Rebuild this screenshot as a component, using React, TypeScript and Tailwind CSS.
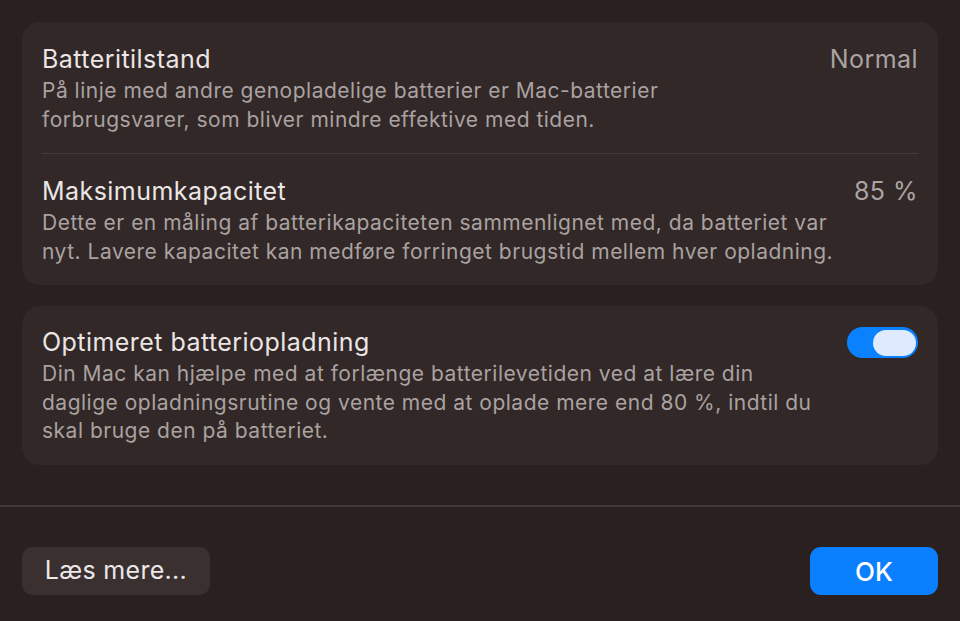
import React from "react";

const font = { fontFamily: "Inter, 'Noto Sans', sans-serif" };

interface RowProps {
  title: string;
  lines: string[];
  right?: React.ReactNode;
}

const Row = ({ title, lines, right }: RowProps) => (
  <div className="flex items-start justify-between">
    <div className="flex flex-col gap-[3px]">
      <div className="text-[25px] leading-[30px] text-[#ebe6e5] tracking-[0.45px]">{title}</div>
      <div className="text-[21px] leading-[28.5px] text-[#aaa2a1] tracking-[0.5px]">
        {lines.map((l) => (
          <div key={l} className="whitespace-nowrap">
            {l}
          </div>
        ))}
      </div>
    </div>
    {right}
  </div>
);

const Value = ({ children }: { children: React.ReactNode }) => (
  <div className="text-[25px] leading-[30px] text-[#aaa4a3] tracking-[0.45px]">{children}</div>
);

const Toggle = () => (
  <div className="relative w-[71px] h-[31px] rounded-full bg-[#0a82ff] shrink-0">
    {/* knob */}
    <div className="absolute right-[2px] top-[3px] w-[43px] h-[26px] rounded-full bg-[#dfeaff]" />
  </div>
);

export default function App() {
  return (
    <div style={font} className="w-[960px] h-[621px] bg-[#2a201f] flex flex-col">
      <div className="flex flex-col gap-[21px] px-[22px] pt-[22px]">
        {/* Battery health card */}
        <div className="rounded-[18px] bg-[#312827] px-[20px] pt-[22px] pb-[19px]">
          <Row
            title="Batteritilstand"
            lines={[
              "På linje med andre genopladelige batterier er Mac-batterier",
              "forbrugsvarer, som bliver mindre effektive med tiden.",
            ]}
            right={<Value>Normal</Value>}
          />
          <div className="h-px bg-[#433a39] mt-[19px] mb-[22px]" />
          <Row
            title="Maksimumkapacitet"
            lines={[
              "Dette er en måling af batterikapaciteten sammenlignet med, da batteriet var",
              "nyt. Lavere kapacitet kan medføre forringet brugstid mellem hver opladning.",
            ]}
            right={<Value>85 %</Value>}
          />
        </div>

        {/* Optimized charging card */}
        <div className="rounded-[18px] bg-[#312827] px-[20px] pt-[21px] pb-[19px]">
          <Row
            title="Optimeret batteriopladning"
            lines={[
              "Din Mac kan hjælpe med at forlænge batterilevetiden ved at lære din",
              "daglige opladningsrutine og vente med at oplade mere end 80 %, indtil du",
              "skal bruge den på batteriet.",
            ]}
            right={<Toggle />}
          />
        </div>
      </div>

      <div className="mt-auto">
        <div className="h-[2px] bg-[#433938]" />
        <div className="flex items-center justify-between px-[22px] pt-[40px] pb-[26px]">
          <button className="h-[48px] w-[188px] rounded-[11px] bg-[#3a3030] text-[25px] tracking-[0.3px] text-[#ece8e7]">
            Læs mere...
          </button>
          <button className="h-[48px] w-[128px] rounded-[11px] bg-[#0a80ff] text-[26px] font-medium text-white">
            OK
          </button>
        </div>
      </div>
    </div>
  );
}
